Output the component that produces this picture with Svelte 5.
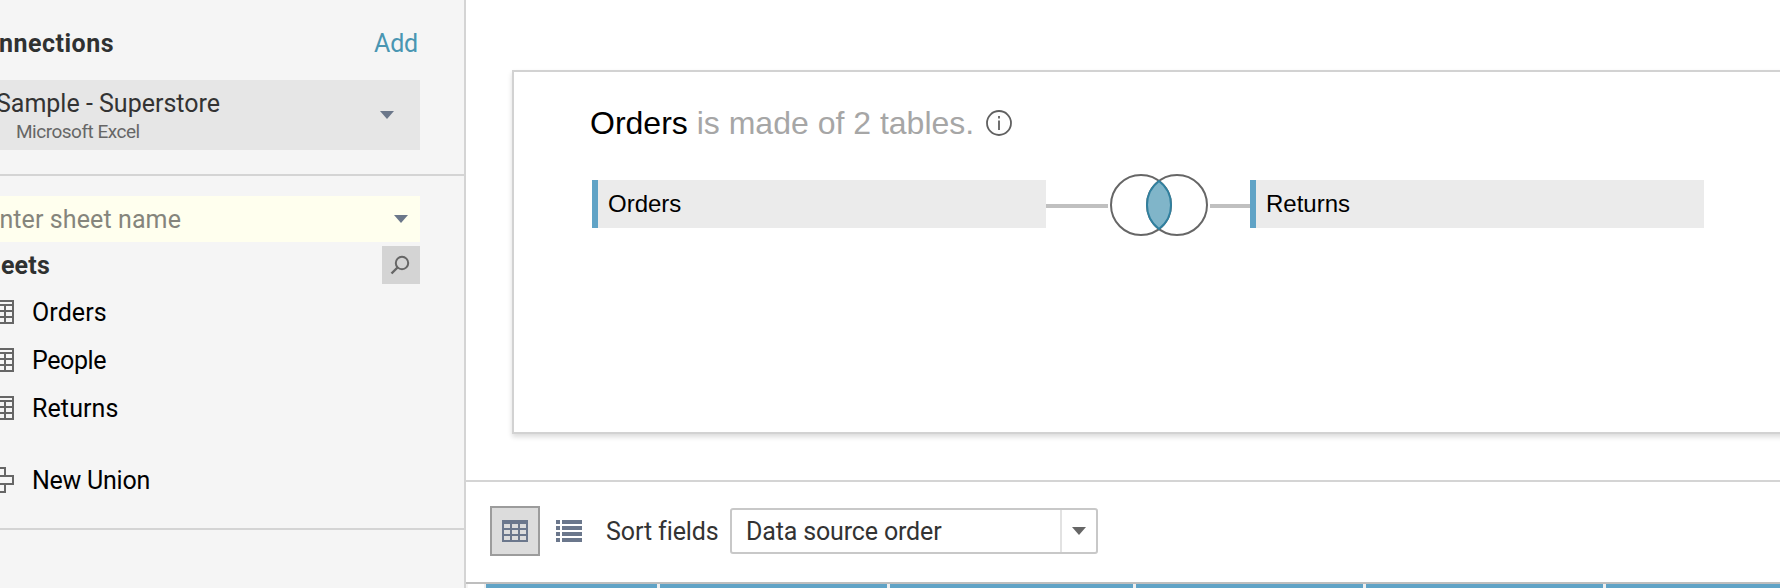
<script>
  const sheets = ['Orders', 'People', 'Returns'];
  const columns = [171, 227, 243, 227, 237, 240];
</script>

<div class="app">
  <aside>
    <section class="connections">
      <div class="head">
        <div class="cut bold conn">Connections</div>
        <a class="add">Add</a>
      </div>
      <div class="source">
        <div class="labels">
          <div class="cut name">Sample - Superstore</div>
          <div class="kind">Microsoft Excel</div>
        </div>
        <svg width="14" height="8"><path d="M0 0h14L7 8z" fill="#6b778a" /></svg>
      </div>
    </section>
    <section class="sheets">
      <div class="search">
        <div class="cut enter">Enter sheet name</div>
        <svg width="14" height="8"><path d="M0 0h14L7 8z" fill="#6b778a" /></svg>
      </div>
      <div class="sheethead">
        <div class="cut bold sh">Sheets</div>
        <div class="find">
          <svg width="38" height="38" fill="none" stroke="#666" stroke-width="2"><circle cx="20" cy="17" r="6.2" /><path d="M15.5 21.5L9.5 27.5" stroke-width="2.4" /></svg>
        </div>
      </div>
      {#each sheets as s}
        <div class="row">
          <svg width="14" height="24" fill="#666"><path d="M0 0h14v2H0zM0 4h14v2H0zM0 10h14v2H0zM0 16h14v2H0zM0 22h14v2H0zM4 5h2v18H4zM12 0h2v24h-2z" /></svg>
          <span class:tight={s === 'People'}>{s}</span>
        </div>
      {/each}
      <div class="row union">
        <svg width="14" height="26" fill="none" stroke="#666" stroke-width="2"><path d="M-3 1H5V9H13V17H5V25H-3M5 9H-3M5 17H-3" /></svg>
        <span class="nu">New Union</span>
      </div>
    </section>
  </aside>
  <main>
    <div class="canvas">
      <div class="card">
        <div class="title">
          <span>Orders <em>is made of 2 tables.</em></span>
          <svg width="26" height="26" fill="none" stroke="#606060"><circle cx="13" cy="13" r="12" stroke-width="1.8" /><path d="M13 10.5V20M13 6v2.4" stroke-width="1.8" /></svg>
        </div>
        <div class="join">
          <div class="table">Orders</div>
          <div class="line l1"></div>
          <svg class="venn" width="98" height="62">
            <g fill="none" stroke="#666" stroke-width="2"><circle cx="31" cy="31" r="30" /><circle cx="67" cy="31" r="30" /></g>
            <path d="M49 7A30 30 0 0 1 49 55A30 30 0 0 1 49 7Z" fill="#80b5c9" stroke="#30809f" stroke-width="2" />
          </svg>
          <div class="line l2"></div>
          <div class="table">Returns</div>
        </div>
      </div>
    </div>
    <div class="toolbar">
      <div class="view">
        <svg width="26" height="22"><path fill-rule="evenodd" fill="#6b778c" d="M0 0h26v22H0zM2 4v4h6V4zM10 4v4h6V4zM18 4v4h6V4zM2 10v4h6v-4zM10 10v4h6v-4zM18 10v4h6v-4zM2 16v4h6v-4zM10 16v4h6v-4zM18 16v4h6v-4z" /></svg>
      </div>
      <svg class="list" width="26" height="22" fill="#6b778c"><path d="M0 0h4v4H0zM6 0h20v4H6zM0 6h4v4H0zM6 6h20v4H6zM0 12h4v4H0zM6 12h20v4H6zM0 18h4v4H0zM6 18h20v4H6z" /></svg>
      <span class="sort">Sort fields</span>
      <div class="select">
        <span class="value">Data source order</span>
        <div class="arrow"><svg width="14" height="8"><path d="M0 0h14L7 8z" fill="#666" /></svg></div>
      </div>
    </div>
    <div class="grid">
      {#each columns as w}
        <div class="col" style="width:{w}px"></div>
      {/each}
    </div>
  </main>
</div>

<style>
  .app { display: flex; width: 1780px; height: 588px; overflow: hidden; background: #fff; font: 25px/30px Roboto, "Liberation Sans", sans-serif; color: #333; white-space: nowrap; }
  .app :global(*) { box-sizing: border-box; }
  svg { display: block; flex: none; }
  aside { width: 466px; flex: none; background: #f5f5f5; border-right: 2px solid #d4d4d4; overflow: hidden; }
  section { border-bottom: 2px solid #d4d4d4; }
  .connections { height: 176px; }
  .sheets { height: 354px; padding-top: 20px; }
  .cut { display: flex; justify-content: flex-end; }
  .bold { font-weight: 700; color: #2f3131; }
  .head { height: 80px; padding: 29px 46px 0 0; display: flex; justify-content: space-between; }
  .conn { width: 114px; letter-spacing: 0.5px; }
  .add { color: #4996b2; letter-spacing: -0.2px; }
  .source { width: 420px; height: 70px; padding-right: 26px; background: #e6e6e6; display: flex; justify-content: space-between; align-items: center; }
  .labels { height: 70px; padding-top: 9px; }
  .name { width: 220px; }
  .kind { padding-left: 16px; font-size: 19px; line-height: 26px; letter-spacing: -0.5px; color: #666; }
  .search { width: 420px; height: 46px; padding-right: 12px; background: #ffffee; display: flex; justify-content: space-between; align-items: center; color: #85857c; }
  .enter { width: 181px; padding-top: 2px; letter-spacing: 0.1px; }
  .sheethead { width: 420px; height: 46px; padding-top: 4px; display: flex; justify-content: space-between; }
  .sh { width: 50px; padding-top: 5px; letter-spacing: 0.2px; }
  .find { width: 38px; height: 38px; background: #d4d4d4; }
  .row { height: 48px; display: flex; align-items: center; gap: 18px; color: #000; }
  .row span { padding-top: 2px; letter-spacing: 0.1px; }
  .row .tight { letter-spacing: -0.4px; }
  .row .nu { letter-spacing: -0.25px; }
  .union { margin-top: 24px; }
  main { width: 1314px; flex: none; }
  .canvas { height: 482px; padding: 70px 0 0 46px; overflow: hidden; border-bottom: 2px solid #d4d4d4; }
  .card { width: 1400px; height: 364px; padding: 29px 0 0 76px; background: #fff; border: 2px solid #d2d2d2; box-shadow: 0 3px 5px rgba(0, 0, 0, 0.14); }
  .title { height: 44px; display: flex; align-items: center; gap: 12px; font: 32px/44px "Liberation Sans", Arial, sans-serif; color: #000; }
  .title em { font-style: normal; color: #a6a6a6; }
  .join { display: flex; align-items: center; height: 62px; margin: 29px 0 0 2px; font: 24px/46px "Liberation Sans", Arial, sans-serif; color: #000; }
  .table { width: 454px; height: 48px; margin-top: -2px; padding: 1px 0 0 10px; background: #ebebeb; border-left: 6px solid #60a3c6; }
  .line { height: 4px; margin-top: 2px; background: #c0c0c0; }
  .l1 { width: 62px; margin-right: 2px; }
  .l2 { width: 40px; margin-left: 2px; }
  .toolbar { height: 102px; padding: 0 0 2px 24px; border-bottom: 2px solid #bebebe; display: flex; align-items: center; }
  .view { width: 50px; height: 50px; display: flex; align-items: center; justify-content: center; background: #dcdcdc; border: 2px solid #9c9c9c; }
  .list { margin-left: 16px; }
  .sort { width: 123px; margin-left: 24px; padding-top: 2px; letter-spacing: -0.1px; }
  .select { width: 368px; height: 46px; margin-left: 1px; border: 2px solid #c8c8c8; border-radius: 3px; display: flex; }
  .value { width: 328px; padding: 7px 0 0 14px; letter-spacing: -0.15px; }
  .arrow { width: 36px; border-left: 2px solid #e2e2e2; display: flex; align-items: center; justify-content: center; }
  .grid { height: 4px; display: flex; gap: 3px; padding-left: 20px; background: linear-gradient(90deg, #f5f5f5 2px, #fff 2px, #fff 18px, #eee 18px); }
  .col { flex: none; background: #60a3c6; }
</style>
